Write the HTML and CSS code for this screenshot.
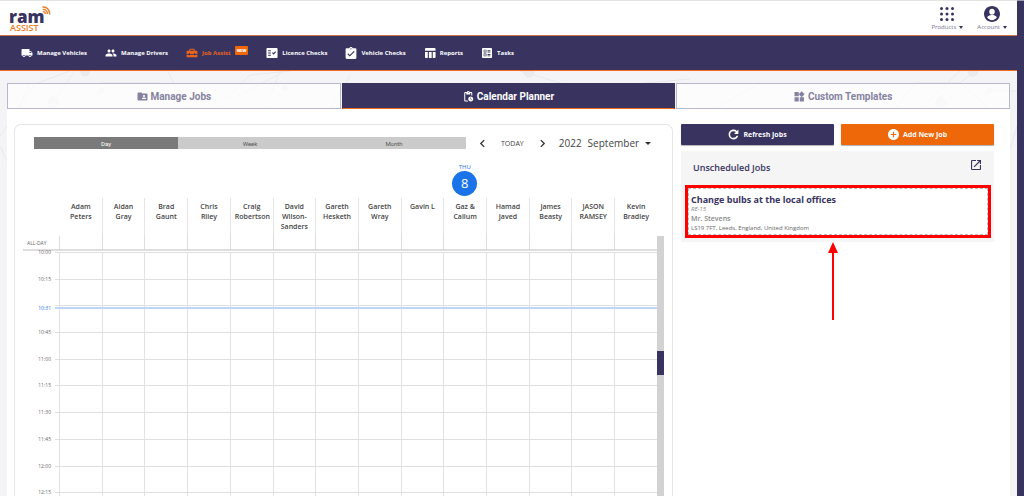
FILE: index.html
```html
<!DOCTYPE html>
<html lang="en">
<head>
<meta charset="utf-8">
<meta name="viewport" content="width=device-width, initial-scale=1">
<title>RAM Assist - Calendar Planner</title>
<link rel="stylesheet" href="styles.css">
</head>
<body>
<div class="app">
  <div class="page">
    <header class="topbar">
      <a class="logo" href="#" aria-label="ram assist">
        <span class="logo-top"><span class="logo-name">ram</span>
        <svg class="logo-waves" viewBox="0 0 10 10" fill="none" stroke="#ee7b25" stroke-width="1.5"><path d="M.5 1.2C5 .6 8.800 4 8.600 9.500"/><path d="M.7 3.800C4 3.600 6.200 6 6.100 9"/><path d="M.9 6.300C2.500 6.300 3.700 7.300 3.700 8.800"/></svg></span>
        <span class="logo-sub">ASSIST</span>
      </a>
      <div class="top-actions">
        <button class="top-action" type="button">
          <svg class="icon-top" viewBox="0 0 16 16" fill="#38335f"><circle cx="2.500" cy="2.500" r="1.500"/><circle cx="8" cy="2.500" r="1.500"/><circle cx="13.500" cy="2.500" r="1.500"/><circle cx="2.500" cy="8" r="1.500"/><circle cx="8" cy="8" r="1.500"/><circle cx="13.500" cy="8" r="1.500"/><circle cx="2.500" cy="13.500" r="1.500"/><circle cx="8" cy="13.500" r="1.500"/><circle cx="13.500" cy="13.500" r="1.500"/></svg>
          <span class="top-label">Products <i class="caret"></i></span>
        </button>
        <button class="top-action" type="button">
          <svg class="icon-top" viewBox="2 2 20 20" fill="#38335f"><path d="M12 2C6.480 2 2 6.480 2 12s4.480 10 10 10 10-4.480 10-10S17.520 2 12 2zm0 3.500c2 0 3.500 1.500 3.500 3.700S14 13 12 13 8.500 11.400 8.500 9.200 10 5.500 12 5.500zm0 14.200c-2.500 0-4.710-1.280-6-3.220.03-1.990 4-3.080 6-3.080s5.970 1.090 6 3.080c-1.290 1.940-3.500 3.220-6 3.220z"/></svg>
          <span class="top-label">Account <i class="caret"></i></span>
        </button>
      </div>
    </header>

    <nav class="nav">
      <a class="nav-item" href="#"><svg class="icon-nav" viewBox="0 3 24 18"><path d="M20 8h-3V4H3c-1.100 0-2 .9-2 2v11h2c0 1.660 1.340 3 3 3s3-1.340 3-3h6c0 1.660 1.340 3 3 3s3-1.340 3-3h2v-5l-3-4zM6 18.500c-.83 0-1.500-.67-1.500-1.500s.67-1.500 1.500-1.500 1.500.67 1.500 1.500-.67 1.500-1.500 1.500zm13.500-9l1.960 2.500H17V9.500h2.500zm-1.500 9c-.83 0-1.500-.67-1.500-1.500s.67-1.500 1.500-1.500 1.500.67 1.500 1.500-.67 1.500-1.500 1.500z"/></svg>Manage Vehicles</a>
      <a class="nav-item" href="#"><svg class="icon-nav" viewBox="0 3 24 18"><path d="M16 11c1.660 0 2.990-1.340 2.990-3S17.660 5 16 5s-3 1.340-3 3 1.340 3 3 3zm-8 0c1.660 0 2.990-1.340 2.990-3S9.660 5 8 5 5 6.340 5 8s1.340 3 3 3zm0 2c-2.330 0-7 1.170-7 3.500V19h14v-2.500C15 14.170 10.330 13 8 13zm8 0c-.29 0-.62.02-.97.05 1.160.84 1.970 1.970 1.970 3.450V19h6v-2.500c0-2.330-4.670-3.500-7-3.500z"/></svg>Manage Drivers</a>
      <a class="nav-item nav-item-active" href="#"><svg class="icon-nav" viewBox="1 3 22 18"><path d="M18 16h-2v-1H8v1H6v-1H2v5h20v-5h-4zM20 8h-3V6c0-1.100-.9-2-2-2H9c-1.100 0-2 .9-2 2v2H4c-1.100 0-2 .9-2 2v4h4v-2h2v2h8v-2h2v2h4v-4c0-1.100-.9-2-2-2zm-5 0H9V6h6z"/></svg>Job Assist<span class="badge">NEW</span></a>
      <a class="nav-item" href="#"><svg class="icon-nav" viewBox="2 3 20 18"><path fill-rule="evenodd" d="M20 3H4c-1.100 0-2 .9-2 2v14c0 1.100.9 2 2 2h16c1.100 0 2-.9 2-2V5c0-1.100-.9-2-2-2zM10 17H5v-2h5v2zm0-4H5v-2h5v2zm0-4H5V7h5v2zm4.820 6L12 12.160l1.410-1.410 1.410 1.420L17.990 9l1.420 1.420z"/></svg>Licence Checks</a>
      <a class="nav-item" href="#"><svg class="icon-nav icon-nav-tall" viewBox="2 1 20 20"><path d="M19 3h-4.180C14.400 1.840 13.300 1 12 1s-2.400.84-2.820 2H5c-1.100 0-2 .9-2 2v14c0 1.100.9 2 2 2h14c1.100 0 2-.9 2-2V5c0-1.100-.9-2-2-2zm-7 0c.55 0 1 .45 1 1s-.45 1-1 1-1-.45-1-1 .45-1 1-1zm-2 14l-4-4 1.410-1.410L10 14.170l6.590-6.590L18 9l-8 8z"/></svg>Vehicle Checks</a>
      <a class="nav-item" href="#"><svg class="icon-nav" viewBox="2 3 20 18"><path d="M10 10.020h5V21h-5V10.020zM17 21h3c1.100 0 2-.9 2-2v-9h-5v11zm3-18H5c-1.100 0-2 .9-2 2v3h19V5c0-1.100-.9-2-2-2zM3 19c0 1.100.9 2 2 2h3V10H3v9z"/></svg>Reports</a>
      <a class="nav-item" href="#"><svg class="icon-nav" viewBox="2 3 20 18"><path fill-rule="evenodd" d="M19 3H5c-1.100 0-2 .9-2 2v14c0 1.100.9 2 2 2h14c1.100 0 2-.9 2-2V5c0-1.100-.9-2-2-2zM6 6h5v5H6zm1.200 1.200v2.600h2.600V7.200zM6 13h5v5H6zm1.200 1.200v2.600h2.600v-2.600zM13 7h5v1.500h-5zm0 2.500h5V11h-5zm0 4.500h5v1.500h-5zm0 2.500h5V18h-5z"/></svg>Tasks</a>
    </nav>

    <main class="content">
      <svg class="backdrop" viewBox="0 0 1017 425" preserveAspectRatio="xMinYMin slice" fill="#ebebef" stroke="#e9e9ed" aria-hidden="true"><path fill="none" d="M0 65 35 13 70 0M30 12 8 60M75 0 48 38M100 12 160 12M168 0 185 38M215 38 250 4 290 0M238 25 285 0M265 38 280 0M330 38 350 5M520 0 580 18 690 8M715 38 760 12M895 38 915 12 960 12 990 38M960 12 975 0M920 38 960 0M990 20 1017 20M1017 55 1008 85M0 75 7 90"/><circle cx="53" cy="31" r="5"/><circle cx="101" cy="20" r="3"/><circle cx="85" cy="1" r="4"/><circle cx="285" cy="17" r="3"/><circle cx="529" cy="1" r="5"/><circle cx="941" cy="31" r="5"/><circle cx="973" cy="0" r="5"/><circle cx="989" cy="20" r="3"/></svg>
      <div class="tabs">
        <button class="tab" type="button"><svg class="icon-tab" viewBox="1 3 22 18"><path d="M20 6h-8l-2-2H4c-1.100 0-1.990.9-1.990 2L2 18c0 1.100.9 2 2 2h16c1.100 0 2-.9 2-2V8c0-1.100-.9-2-2-2zm-5 3c1.100 0 2 .9 2 2s-.9 2-2 2-2-.9-2-2 .9-2 2-2zm4 8h-8v-1c0-1.330 2.670-2 4-2s4 .67 4 2v1z"/></svg>Manage Jobs</button>
        <button class="tab tab-active" type="button"><svg class="icon-tab" viewBox="2 1 21 22"><path d="M17 12c-2.760 0-5 2.240-5 5s2.240 5 5 5 5-2.240 5-5-2.240-5-5-5zm1.650 7.350L16.500 17.200V14h1v2.790l1.850 1.850-.7.710zM18 3h-3.180C14.400 1.840 13.300 1 12 1s-2.400.84-2.820 2H6c-1.100 0-2 .9-2 2v15c0 1.100.9 2 2 2h6.110a6.743 6.743 0 0 1-1.420-2H6V5h2v3h8V5h2v5.080c.71.1 1.380.31 2 .6V5c0-1.100-.9-2-2-2zm-6 2c-.55 0-1-.45-1-1s.45-1 1-1 1 .45 1 1-.45 1-1 1z"/></svg>Calendar Planner</button>
        <button class="tab" type="button"><svg class="icon-tab" viewBox="2 1 21 21"><path d="M13 13v8h8v-8h-8zM3 21h8v-8H3v8zM3 3v8h8V3H3zm13.660-1.310L11 7.340 16.660 13l5.660-5.660-5.660-5.650z"/></svg>Custom Templates</button>
      </div>

      <div class="workspace">
        <section class="calendar">
          <div class="toolbar">
            <div class="views">
              <button class="view view-active" type="button">Day</button>
              <button class="view" type="button">Week</button>
              <button class="view" type="button">Month</button>
            </div>
            <button class="step" type="button" aria-label="Previous day"><svg viewBox="0 0 8 8"><path d="M5.500 1 2.500 4l3 3"/></svg></button>
            <button class="today" type="button">TODAY</button>
            <button class="step" type="button" aria-label="Next day"><svg viewBox="0 0 8 8"><path d="M2.500 1l3 3-3 3"/></svg></button>
            <button class="period" type="button"><span>2022</span><span>September</span><i class="caret caret-dark"></i></button>
          </div>
          <div class="date-row"><div class="date"><span class="weekday">THU</span><span class="day">8</span></div></div>
          <div class="schedule">
            <div class="grid-area">
              <table class="grid">
                <colgroup><col class="col-time"><col class="col-tick"><col span="14"></colgroup>
                <thead>
                  <tr class="staff"><td></td><td></td><th>Adam Peters</th><th>Aidan Gray</th><th>Brad Gaunt</th><th>Chris Riley</th><th>Craig Robertson</th><th>David Wilson-Sanders</th><th>Gareth Hesketh</th><th>Gareth Wray</th><th>Gavin L</th><th>Gaz &amp; Callum</th><th>Hamad Javed</th><th>James Beasty</th><th>JASON RAMSEY</th><th>Kevin Bradley</th></tr>
                  <tr class="all-day"><th colspan="2">ALL-DAY</th><td></td><td></td><td></td><td></td><td></td><td></td><td></td><td></td><td></td><td></td><td></td><td></td><td></td><td></td></tr>
                </thead>
              </table>
              <div class="slots">
                <table class="grid hours">
                  <colgroup><col class="col-time"><col class="col-tick"><col span="14"></colgroup>
                  <tbody>
                    <tr><th>10:00</th><td></td><td></td><td></td><td></td><td></td><td></td><td></td><td></td><td></td><td></td><td></td><td></td><td></td><td></td><td></td></tr>
                    <tr><th>10:15</th><td></td><td></td><td></td><td></td><td></td><td></td><td></td><td></td><td></td><td></td><td></td><td></td><td></td><td></td><td></td></tr>
                    <tr><th></th><td></td><td></td><td></td><td></td><td></td><td></td><td></td><td></td><td></td><td></td><td></td><td></td><td></td><td></td><td></td></tr>
                    <tr><th>10:45</th><td></td><td></td><td></td><td></td><td></td><td></td><td></td><td></td><td></td><td></td><td></td><td></td><td></td><td></td><td></td></tr>
                    <tr><th>11:00</th><td></td><td></td><td></td><td></td><td></td><td></td><td></td><td></td><td></td><td></td><td></td><td></td><td></td><td></td><td></td></tr>
                    <tr><th>11:15</th><td></td><td></td><td></td><td></td><td></td><td></td><td></td><td></td><td></td><td></td><td></td><td></td><td></td><td></td><td></td></tr>
                    <tr><th>11:30</th><td></td><td></td><td></td><td></td><td></td><td></td><td></td><td></td><td></td><td></td><td></td><td></td><td></td><td></td><td></td></tr>
                    <tr><th>11:45</th><td></td><td></td><td></td><td></td><td></td><td></td><td></td><td></td><td></td><td></td><td></td><td></td><td></td><td></td><td></td></tr>
                    <tr><th>12:00</th><td></td><td></td><td></td><td></td><td></td><td></td><td></td><td></td><td></td><td></td><td></td><td></td><td></td><td></td><td></td></tr>
                    <tr><th>12:15</th><td></td><td></td><td></td><td></td><td></td><td></td><td></td><td></td><td></td><td></td><td></td><td></td><td></td><td></td><td></td></tr>
                  </tbody>
                </table>
                <div class="now"><span class="now-time">10:31</span><span class="now-line"></span></div>
              </div>
            </div>
            <div class="scroll"><div class="scroll-track"><div class="scroll-thumb"></div></div></div>
          </div>
        </section>

        <aside class="side">
          <div class="actions">
            <button class="action" type="button"><svg class="icon-action" viewBox="3 3 18 18"><path d="M17.650 6.350A7.958 7.958 0 0 0 12 4c-4.420 0-7.990 3.580-7.990 8s3.570 8 7.990 8c3.730 0 6.840-2.550 7.730-6h-2.580A5.490 5.490 0 0 1 12 17.500 5.500 5.500 0 1 1 12 6.500c1.500 0 2.840.62 3.800 1.600L13 11h7V4l-2.350 2.350z"/></svg>Refresh Jobs</button>
            <button class="action action-add" type="button"><svg class="icon-action" viewBox="2 2 20 20"><path d="M12 2C6.480 2 2 6.480 2 12s4.480 10 10 10 10-4.480 10-10S17.520 2 12 2zm5 11h-4v4h-2v-4H7v-2h4V7h2v4h4v2z"/></svg>Add New Job</button>
          </div>
          <div class="panel">
            <div class="panel-head">
              <h2 class="panel-title">Unscheduled Jobs</h2>
              <button class="pop-out" type="button" aria-label="Open in new window"><svg viewBox="3 3 18 18"><path d="M19 19H5V5h7V3H5a2 2 0 0 0-2 2v14a2 2 0 0 0 2 2h14c1.100 0 2-.9 2-2v-7h-2v7zM14 3v2h3.590l-9.830 9.830 1.410 1.410L19 6.410V10h2V3h-7z"/></svg></button>
            </div>
            <div class="job-frame">
              <article class="job">
                <h3 class="job-title">Change bulbs at the local offices</h3>
                <p class="job-ref">RE-15</p>
                <p class="job-client">Mr. Stevens</p>
                <p class="job-address">LS19 7FT, Leeds, England, United Kingdom</p>
              </article>
              <svg class="arrow" viewBox="0 0 12 78" fill="#fe0000" aria-hidden="true"><path d="M6 0l5 11H7v67H5V11H1z"/></svg>
            </div>
          </div>
        </aside>
      </div>
    </main>
  </div>
  <div class="page-scroll"></div>
</div>
</body>
</html>
```

FILE: styles.css
```css
* { box-sizing: border-box; }

body {
  margin: 0;
  font-family: "Open Sans", "Noto Sans", sans-serif;
  font-size: 7px;
  color: #38335f;
  background: #fff;
}

button {
  margin: 0;
  padding: 0;
  border: 0;
  background: none;
  font: inherit;
  color: inherit;
  cursor: pointer;
}

a { color: inherit; text-decoration: none; }
h2, h3, p { margin: 0; }
svg { display: block; }

.app { display: flex; height: 100vh; overflow: hidden; }
.page { flex: 1; min-width: 0; display: flex; flex-direction: column; }
.page-scroll { width: 7px; background: #38335f; border-top: 1px solid #9b99ad; }

/* Header */
.topbar {
  display: flex;
  justify-content: space-between;
  height: 36px;
  flex: none;
  padding: 0 10px 0 9px;
  border-top: 1px solid #e3e3e3;
  border-bottom: 1px solid #cf7449;
  background: #fff;
}
.logo { display: flex; flex-direction: column; padding-top: 5px; }
.logo-top { display: flex; height: 18px; }
.logo-name { padding-top: 3px; font-size: 17px; font-weight: 800; line-height: 15px; }
.logo-waves { width: 9px; height: 9px; margin-left: -3px; }
.logo-sub { padding-left: 1px; font-size: 9px; font-weight: 600; line-height: 7px; color: #ee7b25; }

.top-actions { display: flex; gap: 14px; }
.top-action { display: flex; flex-direction: column; align-items: center; gap: 1px; padding-top: 5px; }
.icon-top { width: 16px; height: 16px; }
.top-label { display: flex; align-items: center; gap: 3px; font-size: 6px; font-weight: 400; line-height: 9px; color: #77748f; }
.caret { border: 2px solid transparent; border-top: 3px solid #38335f; border-bottom: 0; }

/* Navigation */
.nav {
  display: flex;
  gap: 18px;
  height: 35px;
  flex: none;
  padding: 0 21px;
  border-bottom: 1px solid #f26a1b;
  background: #38335f;
  color: #fff;
  font-size: 6px;
}
.nav-item { display: flex; align-items: center; gap: 4px; font-weight: 700; white-space: nowrap; }
.nav-item-active { color: #e8631c; }
.icon-nav { width: 12px; height: 10px; fill: currentColor; }
.icon-nav-tall { height: 12px; }
.badge {
  align-self: flex-start;
  margin-top: 10px;
  padding: 0 2px;
  border-radius: 1px;
  background: #ef6708;
  color: #fff;
  font-size: 4px;
  font-weight: 800;
  line-height: 9px;
}

/* Tabs */
.content {
  position: relative;
  flex: 1;
  min-height: 0;
  display: flex;
  flex-direction: column;
  padding: 12px 7px 0;
  background: #f4f4f7;
}
.backdrop { position: absolute; inset: 0; width: 100%; height: 100%; }
.tabs { position: relative; display: grid; grid-template-columns: repeat(3, 1fr); gap: 1px; flex: none; }
.tab {
  display: flex;
  align-items: center;
  justify-content: center;
  gap: 3px;
  height: 26px;
  border: 1px solid #b8b7cb;
  background: rgba(255, 255, 255, .7);
  color: #8582a0;
  font-family: Roboto, sans-serif;
  font-size: 10px;
  font-weight: 700;
}
.tab-active { border-color: #38335f; border-bottom-color: #f26a1b; background: #38335f; color: #fff; }
.icon-tab { width: 11px; height: 11px; fill: currentColor; }

.workspace {
  position: relative;
  flex: 1;
  min-height: 0;
  display: grid;
  grid-template-columns: 659fr 313fr;
  gap: 8px;
  padding: 15px 16px 0 7px;
  background: #fff;
}

/* Calendar */
.calendar {
  min-width: 0;
  overflow: hidden;
  padding: 12px 8px 0;
  border: 1px solid #e6e6e8;
  border-bottom: 0;
  border-radius: 7px 7px 0 0;
}
.toolbar { display: flex; align-items: center; height: 12px; padding-left: 11px; color: #444; }
.views { flex: 1; max-width: 432px; display: grid; grid-template-columns: repeat(3, 1fr); margin-right: 12px; }
.view { height: 12px; background: #cbcbcb; color: #555; font-family: Roboto, sans-serif; font-size: 6px; }
.view-active { background: #7a7a7a; color: #fff; }
.step { width: 9px; height: 9px; }
.step svg { width: 9px; height: 9px; fill: none; stroke: #333; stroke-width: 1.200; }
.today { margin: 0 14px; font-size: 7px; }
.period { display: flex; align-items: center; gap: 6px; margin-left: 12px; font-size: 10px; line-height: 12px; }
.caret-dark { border-width: 3px 3px 0; border-top-color: #333; }

.date-row { display: grid; grid-template-columns: repeat(14, 1fr); margin: 14px 7px 2px 36px; }
.date { grid-column: 10; display: flex; flex-direction: column; align-items: center; color: #1a73e8; }
.weekday { font-size: 6px; line-height: 8px; }
.day {
  width: 25px;
  height: 25px;
  border-radius: 50%;
  background: #1a73e8;
  color: #fff;
  font-size: 13px;
  line-height: 25px;
  text-align: center;
}

.schedule { display: flex; }
.grid-area { flex: 1; min-width: 0; }
.grid { width: 100%; table-layout: fixed; border-spacing: 0; border-collapse: separate; }
.grid th, .grid td { padding: 0; }
.col-time { width: 32px; }
.col-tick { width: 4px; }
.staff { height: 38px; }
.grid .staff th {
  padding: 4px 4px 0;
  border-left: 1px solid #e4e4e4;
  font-size: 7px;
  font-weight: 600;
  line-height: 10px;
  vertical-align: top;
  color: #444;
}
.grid .staff th:nth-child(3) { border-left-color: transparent; }
.all-day { height: 15px; }
.all-day th, .all-day td { border-bottom: 2px solid #dedede; }
.all-day td { border-left: 1px solid #dcdcdc; }
.grid .all-day th { padding-left: 4px; font-size: 5px; font-weight: 400; text-align: left; color: #666; }
.slots { position: relative; padding-top: 1px; }
.hours { height: 267px; }
.grid.hours th {
  padding-right: 4px;
  font-size: 5px;
  font-weight: 400;
  line-height: 0;
  text-align: right;
  vertical-align: top;
  color: #666;
}
.hours td { border-top: 1px solid #dfdfdf; border-left: 1px solid #e2e2e2; }
.hours td:nth-child(2) { border-left: 0; }
.now { position: absolute; top: 53px; left: 0; right: 0; display: flex; align-items: center; height: 8px; }
.now-time { width: 32px; padding-right: 4px; font-size: 5px; text-align: right; color: #1a73e8; }
.now-line { flex: 1; height: 2px; background: #bdd6f6; }
.scroll { width: 7px; padding-top: 38px; }
.scroll-track { height: 100%; padding-top: 115px; background: #d2d2d2; }
.scroll-thumb { height: 24px; background: #38335f; }

/* Side panel */
.side { min-width: 0; display: flex; flex-direction: column; gap: 6px; }
.actions { display: grid; grid-template-columns: repeat(2, 1fr); gap: 7px; }
.action {
  display: flex;
  align-items: center;
  justify-content: center;
  gap: 4px;
  height: 21px;
  border-radius: 1px;
  background: #38335f;
  box-shadow: 0 1px 1px rgba(0, 0, 0, .3);
  color: #fff;
  font-size: 7px;
  font-weight: 700;
}
.action-add { background: #ee6708; }
.icon-action { width: 11px; height: 11px; fill: currentColor; }
.panel { padding: 8px 3px 4px 4px; background: #f5f5f5; }
.panel-head { display: flex; align-items: flex-start; justify-content: space-between; height: 26px; padding: 0 10px 0 8px; }
.panel-title { padding-top: 2px; font-size: 9px; font-weight: 600; line-height: 13px; }
.pop-out svg { width: 10px; height: 10px; margin-top: 1px; fill: #38335f; }
.job-frame { position: relative; border: 3px solid #fe0000; background: #fff; }
.job { padding: 4px 2px 2px; border: 1px dashed #bbb; color: #888; }
.job-title { font-size: 9px; font-weight: 700; line-height: 13px; color: #38335f; }
.job-ref { font-size: 6px; font-style: italic; font-weight: 400; line-height: 7px; }
.job-client { font-size: 7px; font-weight: 600; line-height: 11px; }
.job-address { font-size: 6px; font-weight: 400; line-height: 8px; color: #666; }
.arrow { position: absolute; top: 54px; left: 50%; width: 12px; height: 78px; margin-left: -11px; }
```
